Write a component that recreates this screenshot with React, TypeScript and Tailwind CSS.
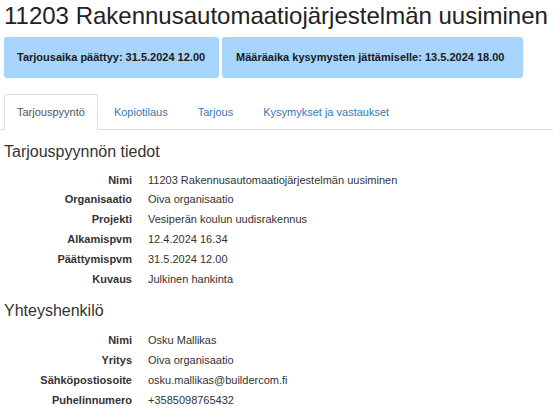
const tiedot = [
  ["Nimi", "11203 Rakennusautomaatiojärjestelmän uusiminen"],
  ["Organisaatio", "Oiva organisaatio"],
  ["Projekti", "Vesiperän koulun uudisrakennus"],
  ["Alkamispvm", "12.4.2024 16.34"],
  ["Päättymispvm", "31.5.2024 12.00"],
  ["Kuvaus", "Julkinen hankinta"],
];

const yhteyshenkilo = [
  ["Nimi", "Osku Mallikas"],
  ["Yritys", "Oiva organisaatio"],
  ["Sähköpostiosoite", "osku.mallikas@buildercom.fi"],
  ["Puhelinnumero", "+3585098765432"],
];

const tabs = ["Tarjouspyyntö", "Kopiotilaus", "Tarjous", "Kysymykset ja vastaukset"];

function InfoList({ rows }: { rows: string[][] }) {
  return (
    <dl className="text-[11px] text-[#333]">
      {rows.map(([label, value]) => (
        <div key={label} className="flex h-[19.8px] items-center">
          <dt className="w-[128px] shrink-0 text-right font-bold">{label}</dt>
          <dd className="ml-[16px]">{value}</dd>
        </div>
      ))}
    </dl>
  );
}

export default function App() {
  return (
    <div
      className="min-h-screen bg-white px-[4px] pt-[3px] text-[#333]"
      style={{ fontFamily: '"Liberation Sans", Arial, sans-serif' }}
    >
      <h1 className="text-[24px] leading-[26px] text-[#222]">
        11203 Rakennusautomaatiojärjestelmän uusiminen
      </h1>

      <div className="mt-[8px] flex gap-[3px]">
        <div className="w-[215px] rounded-[3px] bg-[#a6d4fa] px-[13px] py-[12px] text-[11px] font-bold leading-[17px] text-[#1a1a1a]">
          Tarjousaika päättyy: 31.5.2024 12.00
        </div>
        <div className="w-[301px] rounded-[3px] bg-[#a6d4fa] px-[14px] py-[12px] text-[11px] font-bold leading-[17px] text-[#1a1a1a]">
          Määräaika kysymysten jättämiselle: 13.5.2024 18.00
        </div>
      </div>

      <ul className="-mx-[4px] mt-[16px] flex border-b border-[#ddd] pl-[4px] text-[11px]">
        {tabs.map((t, i) => (
          <li key={t} className="-mb-px mr-[2px]">
            <span
              className={`block rounded-t-[3px] border py-[9px] leading-[16px] ${
                i === 0
                  ? "border-[#ddd] border-b-white bg-white px-[12px] text-[#555]"
                  : "border-transparent px-[13px] text-[#337ab7]"
              }`}
            >
              {t}
            </span>
          </li>
        ))}
      </ul>

      <h2 className="mt-[12px] text-[16px] leading-[20px] text-[#333]">Tarjouspyynnön tiedot</h2>
      <div className="mt-[8px]">
        <InfoList rows={tiedot} />
      </div>

      <h2 className="mt-[12px] text-[16px] leading-[20px] text-[#333]">Yhteyshenkilö</h2>
      <div className="mt-[10px]">
        <InfoList rows={yhteyshenkilo} />
      </div>
    </div>
  );
}
